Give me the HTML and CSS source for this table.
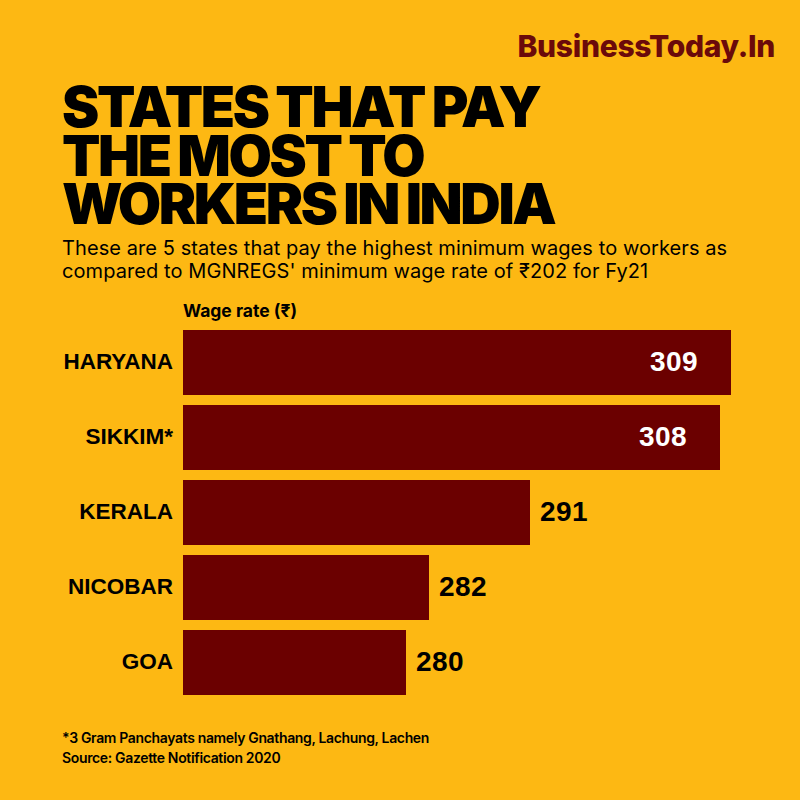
FILE: index.html
```html
<!DOCTYPE html>
<html>
<head>
<meta charset="utf-8">
<link rel="stylesheet" href="styles.css">
</head>
<body>
<div class="page">
  <header class="brand">BusinessToday.In</header>
  <h1 class="title">STATES THAT PAY<br>THE MOST TO<br>WORKERS IN INDIA</h1>
  <p class="subtitle">These are 5 states that pay the highest minimum wages to workers as compared to MGNREGS' minimum wage rate of ₹202 for Fy21</p>
  <div class="chart">
    <div class="axis-label">Wage rate (₹)</div>
    <div class="row">
      <div class="state">HARYANA</div>
      <div class="track"><div class="bar" style="width:548px"><span class="val in">309</span></div></div>
    </div>
    <div class="row">
      <div class="state">SIKKIM*</div>
      <div class="track"><div class="bar" style="width:537px"><span class="val in">308</span></div></div>
    </div>
    <div class="row">
      <div class="state">KERALA</div>
      <div class="track"><div class="bar" style="width:347px"></div><span class="val out">291</span></div>
    </div>
    <div class="row">
      <div class="state">NICOBAR</div>
      <div class="track"><div class="bar" style="width:246px"></div><span class="val out">282</span></div>
    </div>
    <div class="row">
      <div class="state">GOA</div>
      <div class="track"><div class="bar" style="width:223px"></div><span class="val out">280</span></div>
    </div>
  </div>
  <footer class="notes">
    <div>*3 Gram Panchayats namely Gnathang, Lachung, Lachen</div>
    <div>Source: Gazette Notification 2020</div>
  </footer>
</div>
</body>
</html>
```
FILE: styles.css
```css
html, body {
  margin: 0;
  padding: 0;
}
body {
  background: #fdb813;
}
.page {
  width: 800px;
  height: 800px;
  box-sizing: border-box;
  background: #fdb813;
  padding: 28px 25px 0 62px;
  display: flex;
  flex-direction: column;
  font-family: Inter, "Liberation Sans", sans-serif;
  color: #000;
}
.brand {
  align-self: flex-end;
  font-family: Inter, "Liberation Sans", sans-serif;
  font-weight: 800;
  font-size: 30px;
  line-height: 36px;
  letter-spacing: -0.3px;
  color: #6b0a0a;
}
.title {
  margin: 19px 0 0 0;
  font-family: Inter, "Liberation Sans", sans-serif;
  font-weight: 900;
  font-size: 56px;
  line-height: 48.5px;
  letter-spacing: -2.4px;
  word-spacing: -1px;
}
.subtitle {
  margin: 8px 0 0 0;
  font-size: 20px;
  line-height: 23px;
  font-weight: 400;
  letter-spacing: 0.08px;
  width: 730px;
}
.chart {
  margin-top: 18px;
  display: flex;
  flex-direction: column;
  gap: 10px;
}
.axis-label {
  margin-left: 121px;
  font-size: 17.5px;
  font-weight: 700;
  line-height: 20px;
  letter-spacing: 0;
  margin-bottom: -1px;
}
.row {
  display: grid;
  grid-template-columns: 111px 1fr;
  column-gap: 10px;
  height: 65px;
  align-items: center;
}
.state {
  text-align: right;
  font-family: "Liberation Sans", Arial, sans-serif;
  font-weight: 700;
  font-size: 22.5px;
}
.track {
  display: flex;
  align-items: center;
  height: 65px;
}
.bar {
  height: 65px;
  background: #6b0000;
  display: flex;
  align-items: center;
  justify-content: flex-end;
  box-sizing: border-box;
  padding-right: 33px;
}
.val {
  font-family: "Liberation Sans", Arial, sans-serif;
  font-weight: 700;
  font-size: 28px;
  letter-spacing: 0.4px;
}
.val.in {
  color: #fff;
}
.val.out {
  margin-left: 10px;
}
.notes {
  margin-top: 33px;
  font-size: 14px;
  font-weight: 600;
  line-height: 20px;
  letter-spacing: -0.35px;
}
```
